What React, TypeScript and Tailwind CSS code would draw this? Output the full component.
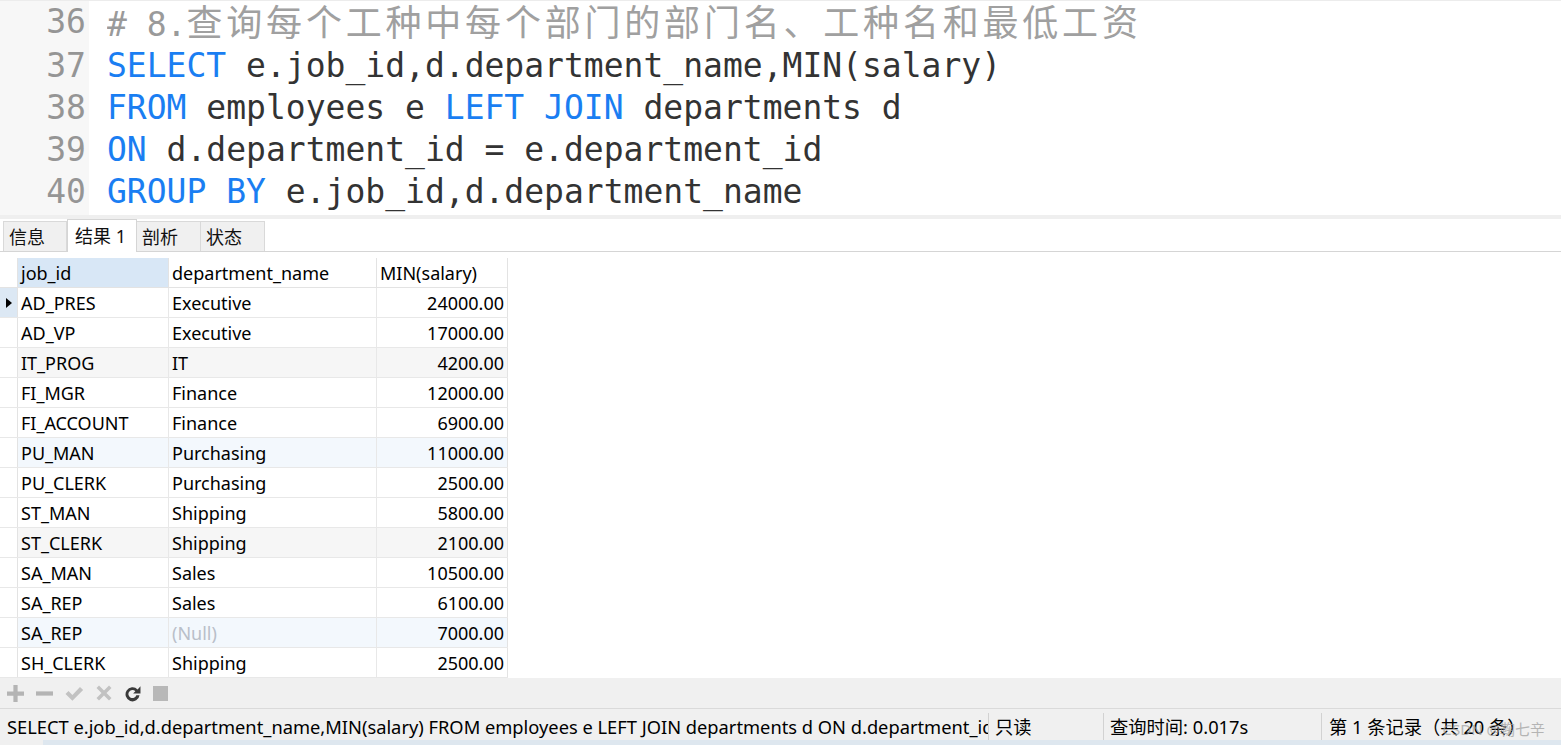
import React from "react";

const mono = { fontFamily: '"DejaVu Sans Mono", "Liberation Mono", "Noto Sans CJK SC", monospace' };
const ui = { fontFamily: '"Noto Sans", "Noto Sans CJK SC", sans-serif' };

type Row = { job: string; dept: string | null; min: string; tone?: "gray" | "blue"; current?: boolean };

const rows: Row[] = [
  { job: "AD_PRES", dept: "Executive", min: "24000.00", current: true },
  { job: "AD_VP", dept: "Executive", min: "17000.00" },
  { job: "IT_PROG", dept: "IT", min: "4200.00", tone: "gray" },
  { job: "FI_MGR", dept: "Finance", min: "12000.00" },
  { job: "FI_ACCOUNT", dept: "Finance", min: "6900.00" },
  { job: "PU_MAN", dept: "Purchasing", min: "11000.00", tone: "blue" },
  { job: "PU_CLERK", dept: "Purchasing", min: "2500.00" },
  { job: "ST_MAN", dept: "Shipping", min: "5800.00" },
  { job: "ST_CLERK", dept: "Shipping", min: "2100.00", tone: "gray" },
  { job: "SA_MAN", dept: "Sales", min: "10500.00" },
  { job: "SA_REP", dept: "Sales", min: "6100.00" },
  { job: "SA_REP", dept: null, min: "7000.00", tone: "blue" },
  { job: "SH_CLERK", dept: "Shipping", min: "2500.00" },
];

function Kw({ children }: { children: React.ReactNode }) {
  return <span className="text-[#1a7ef2]">{children}</span>;
}

function CodeArea() {
  return (
    <div className="flex h-[215px] border-t border-[#ececec] text-[33px] leading-[42px]" style={mono}>
      <div className="w-[89px] shrink-0 bg-[#f7f7f7] pr-[3px] pt-[2px] text-right text-[#959595]">
        {[36, 37, 38, 39, 40].map((n) => (
          <div key={n} className="h-[42px] first:leading-[38px]">
            {n}
          </div>
        ))}
      </div>
      <div className="flex-1 whitespace-pre bg-white pl-[18px] pt-[2px] text-[#333]">
        <div className="h-[42px] overflow-hidden leading-[34px] text-[#9a9a9a]">
          # 8.
          <span
            className="text-[36px] leading-[34px] tracking-[3.8px] text-[#a0a0a0]"
            style={{ fontFamily: '"Noto Sans CJK SC", sans-serif' }}
          >
            查询每个工种中每个部门的部门名、工种名和最低工资
          </span>
        </div>
        <div className="h-[42px]">
          <Kw>SELECT</Kw> e.job_id,d.department_name,MIN(salary)
        </div>
        <div className="h-[42px]">
          <Kw>FROM</Kw> employees e <Kw>LEFT JOIN</Kw> departments d
        </div>
        <div className="h-[42px]">
          <Kw>ON</Kw> d.department_id = e.department_id
        </div>
        <div className="h-[42px]">
          <Kw>GROUP BY</Kw> e.job_id,d.department_name
        </div>
      </div>
    </div>
  );
}

function Tabs() {
  const tabs = [
    { label: "信息", w: "w-[64px]" },
    { label: "结果 1", w: "w-[70px]", active: true },
    { label: "剖析", w: "w-[64px]" },
    { label: "状态", w: "w-[64px]" },
  ];
  return (
    <div className="flex h-[33px] items-end border-b border-[#d5d5d5] bg-white pl-[3px] text-[18px] text-[#111]" style={ui}>
      {tabs.map((t) =>
        t.active ? (
          <div
            key={t.label}
            className={`${t.w} -mb-px flex h-[33px] items-center border border-b-0 border-[#d5d5d5] bg-white pl-[7px]`}
          >
            {t.label}
          </div>
        ) : (
          <div
            key={t.label}
            className={`${t.w} flex h-[30px] items-center border border-b-0 border-l-0 border-[#d9d9d9] bg-[#f0f0f0] pl-[5px] pt-[1px] first:border-l`}
          >
            {t.label}
          </div>
        )
      )}
    </div>
  );
}

function Grid() {
  return (
    <div className="h-[426px] bg-white pt-[6px] text-[18px] text-black" style={ui}>
      <div className="flex h-[30px] w-[508px] border-b border-[#e3e3e3] leading-[30px]">
        <div className="w-[18px] shrink-0 border-r border-[#e3e3e3]" />
        <div className="w-[151px] shrink-0 border-r border-[#e3e3e3] bg-[#d8e7f6] pl-[3px]">job_id</div>
        <div className="w-[208px] shrink-0 border-r border-[#e3e3e3] pl-[3px]">department_name</div>
        <div className="w-[131px] shrink-0 border-r border-[#e3e3e3] pl-[3px]">MIN(salary)</div>
      </div>
      {rows.map((r, i) => {
        const bg = r.tone === "gray" ? "bg-[#f6f6f6]" : r.tone === "blue" ? "bg-[#f3f8fd]" : "bg-white";
        return (
          <div key={i} className="flex h-[30px] w-[508px] border-b border-[#e8e8e8] leading-[30px]">
            <div
              className={`flex w-[18px] shrink-0 items-center justify-center border-r border-[#e3e3e3] ${
                r.current ? "bg-[#dce8f4]" : "bg-white"
              }`}
            >
              {r.current && (
                <svg width="6" height="10" viewBox="0 0 6 10">
                  <path d="M0 0 L6 5 L0 10 Z" fill="#000" />
                </svg>
              )}
            </div>
            <div className={`w-[151px] shrink-0 border-r border-[#e8e8e8] pl-[3px] ${bg}`}>{r.job}</div>
            <div className={`w-[208px] shrink-0 border-r border-[#e8e8e8] pl-[3px] ${bg}`}>
              {r.dept ?? <span className="text-[#b9bfc9]">(Null)</span>}
            </div>
            <div className={`w-[131px] shrink-0 border-r border-[#e3e3e3] pr-[3px] text-right ${bg}`}>{r.min}</div>
          </div>
        );
      })}
    </div>
  );
}

function Toolbar() {
  return (
    <div className="flex h-[31px] items-center gap-[12px] border-b border-[#dadada] bg-[#f0f0f0] pl-[7px]">
      <svg width="17" height="17" viewBox="0 0 16 16">
        <path d="M6 0h4v6h6v4h-6v6H6v-6H0V6h6z" fill="#b4b4b4" />
      </svg>
      <svg width="17" height="17" viewBox="0 0 16 16">
        <rect x="0" y="6" width="16" height="4" fill="#b4b4b4" />
      </svg>
      <svg width="19" height="17" viewBox="0 0 18 16">
        <path d="M0.5 8.5 L3.3 5.7 L7 9.4 L14.2 1.8 L17.2 4.6 L7 14.8 Z" fill="#c2c2c2" />
      </svg>
      <svg width="16" height="16" viewBox="0 0 16 16">
        <path d="M0.5 3 L3 0.5 L8 5.5 L13 0.5 L15.5 3 L10.5 8 L15.5 13 L13 15.5 L8 10.5 L3 15.5 L0.5 13 L5.5 8 Z" fill="#c2c2c2" />
      </svg>
      <svg width="17" height="17" viewBox="0 0 16 16">
        <path
          d="M12.8 4.2 A6.6 6.6 0 1 0 14.6 9.6 L11.6 9.6 A3.8 3.8 0 1 1 10.7 5.9 L8.6 8 L15.5 8 L15.5 1.2 Z"
          fill="#3a3a3a"
        />
      </svg>
      <svg width="15" height="15" viewBox="0 0 15 15">
        <rect x="0" y="0" width="15" height="15" fill="#b8b8b8" />
      </svg>
    </div>
  );
}

function StatusBar() {
  return (
    <div className="relative flex h-[31px] items-center bg-[#f0f0f0] pt-[4px] text-[18.3px] text-black" style={ui}>
      <div className="w-[988px] shrink-0 overflow-hidden whitespace-nowrap pl-[7px]">
        SELECT e.job_id,d.department_name,MIN(salary) FROM employees e LEFT JOIN departments d ON d.department_id = e.department_id GROUP BY e.job_id,d.department_name
      </div>
      <div className="flex h-full w-[115px] shrink-0 items-center border-l border-[#d2d2d2] pl-[6px]">只读</div>
      <div className="flex h-full w-[218px] shrink-0 items-center border-l border-[#d2d2d2] pl-[6px]">查询时间: 0.017s</div>
      <div className="flex h-full flex-1 items-center border-l border-[#d2d2d2] pl-[7px]">第 1 条记录（共 20 条）</div>
      <div className="absolute right-[16px] top-[9px] text-[15px] text-[#9c9c9c] opacity-70">CSDN @鞠七辛</div>
    </div>
  );
}

export default function App() {
  return (
    <div className="flex h-[746px] w-[1561px] flex-col overflow-hidden bg-white">
      <CodeArea />
      <div className="h-[4px] bg-[#efefef]" />
      <Tabs />
      <Grid />
      <Toolbar />
      <StatusBar />
      <div className="flex h-[5px]">
        <div className="w-[43px] bg-[#f0f0f0]" />
        <div className="flex-1 bg-[#dee7ef]" />
      </div>
    </div>
  );
}
